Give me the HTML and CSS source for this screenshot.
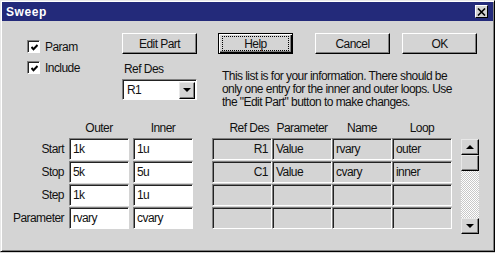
FILE: index.html
```html
<!DOCTYPE html>
<html>
	<head>
		<meta charset="UTF-8">
		<title>Sweep</title>
		<link rel="stylesheet" href="styles.css">
	</head>
	<body>
		<div class="window">
			<div class="titlebar">
				<span class="title">Sweep</span>
				<span class="close">
					<svg width="9" height="8" viewBox="0 0 9 8"><path d="M1 0.5 L8 7.5 M8 0.5 L1 7.5" stroke="#000" stroke-width="1.6"/></svg>
				</span>
			</div>
			<div class="top">
				<div class="checks">
					<label class="check_row">
						<span class="box"><svg width="7" height="7" viewBox="0 0 7 7"><polyline points="0.5,3 2.5,5.2 6.5,1" fill="none" stroke="#000" stroke-width="2"/></svg></span>
						Param
					</label>
					<label class="check_row">
						<span class="box"><svg width="7" height="7" viewBox="0 0 7 7"><polyline points="0.5,3 2.5,5.2 6.5,1" fill="none" stroke="#000" stroke-width="2"/></svg></span>
						Include
					</label>
				</div>
				<div class="refcol">
					<div class="btn">Edit Part</div>
					<div class="ref_label">Ref Des</div>
					<div class="select">
						<span class="select_value">R1</span>
						<span class="drop_btn"><span class="arrow_down"></span></span>
					</div>
				</div>
				<div class="rightcol">
					<div class="buttons">
						<div class="btn btn_default"><span class="focus">Help</span></div>
						<div class="btn btn_cancel">Cancel</div>
						<div class="btn">OK</div>
					</div>
					<p class="info">This list is for your information. There should be<br>only one entry for the inner and outer loops. Use<br>the "Edit Part" button to make changes.</p>
				</div>
			</div>
			<div class="bottom">
				<div class="fields">
					<div></div>
					<div class="head">Outer</div>
					<div class="head">Inner</div>

					<div class="row_label">Start</div>
					<div class="field">1k</div>
					<div class="field">1u</div>

					<div class="row_label">Stop</div>
					<div class="field">5k</div>
					<div class="field">5u</div>

					<div class="row_label">Step</div>
					<div class="field">1k</div>
					<div class="field">1u</div>

					<div class="row_label">Parameter</div>
					<div class="field">rvary</div>
					<div class="field">cvary</div>
				</div>
				<div class="list">
					<div class="head head_right">Ref Des</div>
					<div class="head">Parameter</div>
					<div class="head">Name</div>
					<div class="head">Loop</div>

					<div class="cell cell_right">R1</div>
					<div class="cell">Value</div>
					<div class="cell">rvary</div>
					<div class="cell">outer</div>

					<div class="cell cell_right">C1</div>
					<div class="cell">Value</div>
					<div class="cell">cvary</div>
					<div class="cell">inner</div>

					<div class="cell"></div>
					<div class="cell"></div>
					<div class="cell"></div>
					<div class="cell"></div>

					<div class="cell"></div>
					<div class="cell"></div>
					<div class="cell"></div>
					<div class="cell"></div>
				</div>
				<div class="scrollbar">
					<div class="sb_btn"><span class="arrow_up"></span></div>
					<div class="sb_thumb"></div>
					<div class="sb_track"></div>
					<div class="sb_btn"><span class="arrow_down"></span></div>
				</div>
			</div>
		</div>
	</body>
</html>
```
FILE: styles.css
```css
html, body{
	margin: 0;
	padding: 0;
}
body{
	width: 495px;
	height: 253px;
	overflow: hidden;
	background: #d4d4d4;
	font-family: "Liberation Sans", Arial, sans-serif;
	font-size: 12px;
	letter-spacing: -0.55px;
	color: #111;
}
.window{
	box-sizing: border-box;
	width: 495px;
	height: 252px;
	padding: 1px;
	background: #d4d4d4;
	border: 1px solid;
	border-color: #e8e8e8 #000 #000 #e8e8e8;
	box-shadow: inset 1px 1px #fff, inset -1px -1px #808080;
}
.titlebar{
	height: 19px;
	background: #232a7a;
	display: flex;
	align-items: center;
	justify-content: space-between;
	padding: 0 5px 0 4px;
}
.title{
	color: #fff;
	font-weight: bold;
	font-size: 12px;
	letter-spacing: 0.6px;
}
.close{
	box-sizing: border-box;
	width: 13px;
	height: 13px;
	background: #d4d4d4;
	border: 1px solid;
	border-color: #fff #000 #000 #fff;
	display: flex;
	align-items: center;
	justify-content: center;
}
/* top part */
.top{
	box-sizing: border-box;
	height: 100px;
	display: flex;
	align-items: flex-start;
	padding-top: 12px;
}
.checks{
	margin: 7px 0 0 25px;
	width: 95px;
	display: flex;
	flex-direction: column;
	gap: 8px;
}
.check_row{
	display: flex;
	align-items: center;
	height: 13px;
	gap: 5px;
}
.box{
	box-sizing: border-box;
	width: 13px;
	height: 13px;
	background: #fff;
	border: 1px solid;
	border-color: #808080 #fff #fff #808080;
	box-shadow: inset 1px 1px #222;
	display: flex;
	align-items: center;
	justify-content: center;
	padding: 1px 0 0 1px;
}
.refcol{
	width: 75px;
	display: flex;
	flex-direction: column;
}
.btn{
	box-sizing: border-box;
	width: 75px;
	height: 21px;
	background: #d4d4d4;
	border: 1px solid;
	border-color: #fff #000 #000 #fff;
	box-shadow: inset -1px -1px #808080;
	display: flex;
	align-items: center;
	justify-content: center;
}
.btn_default{
	border: 1px solid #000;
	box-shadow: inset 1px 1px #fff, inset -1px -1px #000, inset -2px -2px #808080;
	margin-right: 22px;
}
.focus{
	box-sizing: border-box;
	width: 67px;
	height: 15px;
	border: 1px dotted #000;
	display: flex;
	align-items: center;
	justify-content: center;
}
.btn_cancel{
	margin-right: 12px;
}
.ref_label{
	margin-top: 8px;
	line-height: 15px;
	padding-left: 2px;
}
.select{
	box-sizing: border-box;
	margin-top: 2px;
	height: 21px;
	background: #fff;
	border: 1px solid;
	border-color: #808080 #fff #fff #808080;
	box-shadow: inset 1px 1px #222;
	display: flex;
	align-items: center;
	justify-content: space-between;
	padding: 1px 1px 0 4px;
}
.drop_btn{
	box-sizing: border-box;
	width: 16px;
	height: 17px;
	background: #d4d4d4;
	border: 1px solid;
	border-color: #e8e8e8 #000 #000 #e8e8e8;
	box-shadow: inset -1px -1px #808080;
	display: flex;
	align-items: center;
	justify-content: center;
}
.arrow_down, .arrow_up{
	width: 0;
	height: 0;
	border-left: 4px solid transparent;
	border-right: 4px solid transparent;
}
.arrow_down{
	border-top: 4px solid #000;
}
.arrow_up{
	border-bottom: 4px solid #000;
}
.rightcol{
	margin-left: 21px;
}
.buttons{
	display: flex;
}
.info{
	margin: 16px 0 0 4px;
	line-height: 13px;
	white-space: nowrap;
}
/* bottom part */
.bottom{
	display: flex;
	align-items: flex-start;
}
.fields{
	display: grid;
	grid-template-columns: 63px 60px 60px;
	grid-template-rows: 16px repeat(4, 22px);
	column-gap: 4px;
	row-gap: 1px;
}
.head{
	text-align: center;
	line-height: 15px;
	white-space: nowrap;
}
.head_right{
	text-align: right;
	padding-right: 3px;
}
.row_label{
	text-align: right;
	line-height: 22px;
	padding-right: 1px;
}
.field, .cell{
	box-sizing: border-box;
	border: 1px solid;
	border-color: #808080 #fff #fff #808080;
	box-shadow: inset 1px 1px #222;
	padding: 1px 3px 0 3px;
	line-height: 19px;
	white-space: nowrap;
}
.field{
	background: #fff;
}
.cell{
	background: #d4d4d4;
}
.cell_right{
	text-align: right;
}
.list{
	margin-left: 19px;
	display: grid;
	grid-template-columns: repeat(4, 60px);
	grid-template-rows: 16px repeat(4, 22px);
	row-gap: 1px;
}
.scrollbar{
	margin: 18px 0 0 9px;
	width: 18px;
	height: 95px;
	display: flex;
	flex-direction: column;
}
.sb_btn, .sb_thumb{
	box-sizing: border-box;
	height: 16px;
	background: #d4d4d4;
	border: 1px solid;
	border-color: #e8e8e8 #000 #000 #e8e8e8;
	box-shadow: inset -1px -1px #808080;
	display: flex;
	align-items: center;
	justify-content: center;
}
.sb_track{
	flex: 1;
	background: repeating-conic-gradient(#fff 0 25%, #c8c8c8 0 50%) 0 0 / 2px 2px;
}
```
